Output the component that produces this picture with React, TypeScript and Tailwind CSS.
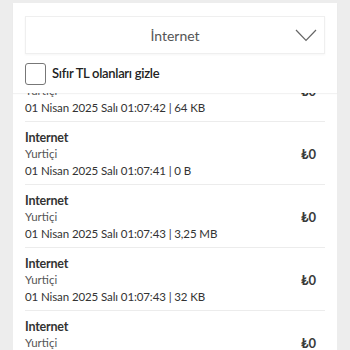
import React from "react";

const items = [
  { date: "01 Nisan 2025 Salı 01:07:42 | 64 KB" },
  { date: "01 Nisan 2025 Salı 01:07:41 | 0 B" },
  { date: "01 Nisan 2025 Salı 01:07:43 | 3,25 MB" },
  { date: "01 Nisan 2025 Salı 01:07:43 | 32 KB" },
  { date: "01 Nisan 2025 Salı 01:07:44 | 12 KB" },
];

function UsageRow({ date }: { date: string }) {
  return (
    <div className="flex items-center justify-between border-b border-[#ececec] pt-[8px] pb-[5px]">
      <div className="flex flex-col">
        <span className="text-[12.5px] leading-[16px] font-bold tracking-[-0.2px] text-[#333]">Internet</span>
        <span className="text-[11.5px] leading-[16px] text-[#555]">Yurtiçi</span>
        <span className="text-[11.5px] leading-[17px] tracking-[-0.1px] text-[#333]">{date}</span>
      </div>
      <span className="mr-[9px] text-[13px] font-bold text-[#3a3a3a]">₺0</span>
    </div>
  );
}

export default function App() {
  return (
    <div className="h-[350px] w-[350px] overflow-hidden bg-[#ededed] pt-[3px] pl-[13px] font-['Lato',sans-serif]">
      <div className="relative flex h-[347px] w-[324px] flex-col bg-white">
        <div className="relative z-10 bg-white px-[12px] pt-[13px] shadow-[0_1px_1px_rgba(0,0,0,0.05)]">
          <div className="relative flex h-[38px] items-center justify-center border border-[#efefef] shadow-[0_1px_2px_rgba(0,0,0,0.04)]">
            <span className="text-[14px] text-[#555]">İnternet</span>
            <svg className="absolute right-[7px] top-[12px]" width="22" height="13" viewBox="0 0 22 13">
              <path d="M1 1 L11 11.5 L21 1" fill="none" stroke="#666" strokeWidth="1.2" />
            </svg>
          </div>
          <div className="flex h-[39px] items-center gap-[6px]">
            <div className="h-[22px] w-[21px] rounded-[3px] border border-[#777]" />
            <span className="text-[13px] font-semibold tracking-[-0.3px] text-[#222]">Sıfır TL olanları gizle</span>
          </div>
        </div>
        <div className="flex-1 overflow-hidden px-[12px]">
          <div className="mt-[-34px]">
            {items.map((it, i) => (
              <UsageRow key={i} date={it.date} />
            ))}
          </div>
        </div>
      </div>
    </div>
  );
}
